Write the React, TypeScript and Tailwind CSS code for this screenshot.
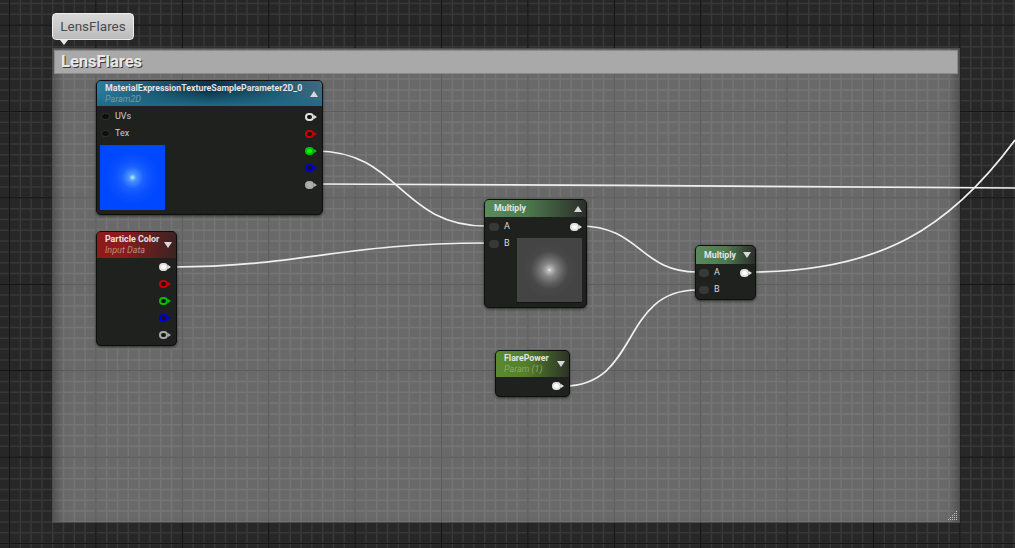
import React from 'react';

type PinColor = 'white' | 'red' | 'green' | 'blue' | 'gray';

const pinBorder: Record<PinColor, string> = {
  white: 'border-[#e0e0e0]',
  red: 'border-[#c80000]',
  green: 'border-[#00c000]',
  blue: 'border-[#0000d0]',
  gray: 'border-[#a8a8a8]',
};

const pinArrow: Record<PinColor, string> = {
  white: 'border-l-[#e0e0e0]',
  red: 'border-l-[#c80000]',
  green: 'border-l-[#00c000]',
  blue: 'border-l-[#0000d0]',
  gray: 'border-l-[#a8a8a8]',
};

// output pin, filled when a wire is attached
const OutPin = ({ color, filled, fill }: { color: PinColor; filled?: boolean; fill?: string }) => (
  <div className="flex h-[17px] items-center">
    <div className={`h-[8px] w-[9px] rounded-full border-2 ${pinBorder[color]} ${filled ? fill : 'bg-[#141414]'}`} />
    <div className={`h-0 w-0 border-y-[2px] border-l-[3px] border-y-transparent ${pinArrow[color]}`} />
  </div>
);

const InPin = ({ label }: { label: string }) => (
  <div className="flex h-[17px] items-center gap-[5px]">
    <div className="h-[8px] w-[10px] rounded-full bg-[#383838]" />
    <span className="text-[9px] leading-none text-[#dcdcdc]">{label}</span>
  </div>
);

const DarkInPin = ({ label }: { label: string }) => (
  <div className="flex h-[17px] items-center gap-[5px]">
    <div className="h-[7px] w-[9px] rounded-full border border-[#333] bg-[#0e0e0e]" />
    <span className="text-[9px] leading-none text-[#d0d0d0]">{label}</span>
  </div>
);

const UpArrow = () => (
  <div className="h-0 w-0 border-x-[4px] border-b-[6px] border-x-transparent border-b-[#d8d8d8]" />
);

const DownArrow = () => (
  <div className="h-0 w-0 border-x-[4px] border-t-[6px] border-x-transparent border-t-[#d8d8d8]" />
);

const nodeBox =
  'absolute flex flex-col overflow-hidden rounded-[5px] border border-[#0e0e0e] bg-[#1f211f] shadow-[0_1px_3px_rgba(0,0,0,0.6)]';

const NodeTitle = ({ title, sub, subColor }: { title: string; sub?: string; subColor?: string }) => (
  <div className="flex min-w-0 flex-col">
    <span className="whitespace-nowrap text-[8.8px] font-bold leading-[11px] text-[#e4e4e4]">{title}</span>
    {sub && <span className={`whitespace-nowrap text-[9px] italic leading-[11px] ${subColor}`}>{sub}</span>}
  </div>
);

// graph paper behind everything: 8 minor cells to a major cell
const STEP = 10.8;
const xs = Array.from({ length: 96 }, (_, i) => 9.5 + (i - 1) * STEP);
const ys = Array.from({ length: 54 }, (_, i) => 3.5 + (i - 1) * STEP);

const GridLines = () => (
  <svg className="absolute left-0 top-0" width="1015" height="548">
    <g stroke="#383838" strokeWidth="1.5">
      {xs.map((x) => <line key={x} x1={x} y1="0" x2={x} y2="548" />)}
      {ys.map((y) => <line key={y} x1="0" y1={y} x2="1015" y2={y} />)}
    </g>
    <g stroke="#141414" strokeWidth="1.2">
      {xs.filter((_, i) => (i - 1) % 8 === 0).map((x) => <line key={x} x1={x} y1="0" x2={x} y2="548" />)}
      {ys.filter((_, i) => (i - 3) % 8 === 0).map((y) => <line key={y} x1="0" y1={y} x2="1015" y2={y} />)}
    </g>
  </svg>
);

const Wires = () => (
  <svg className="absolute left-0 top-0" width="1015" height="548" fill="none" stroke="#f0f0f0" strokeWidth="1.7">
    <path d="M316 151 C400 151 400 226 486 226" />
    <path d="M316 184 C560 184 760 187 1015 188" />
    <path d="M172 267 C300 267 340 243 486 243" />
    <path d="M580 226 C640 226 640 272 697 272" />
    <path d="M564 386 C640 386 620 290 697 290" />
    <path d="M750 272 C880 272 950 228 1015 140" />
  </svg>
);

export default function App() {
  return (
    <div
      className="relative h-[548px] w-[1015px] overflow-hidden bg-[#272727]"
      style={{ fontFamily: 'Roboto, "Liberation Sans", sans-serif' }}
    >
      <GridLines />

      {/* comment bubble */}
      <div className="absolute left-[52px] top-[13px] flex h-[27px] w-[82px] items-center justify-center rounded-[4px] border border-[#eeeeee] bg-[linear-gradient(to_bottom,#d8d8d8,#bcbcbc)] text-[13.5px] text-[#4c4c4c]">
        LensFlares
        <div className="absolute left-[7px] top-[26px] h-0 w-0 border-x-[4px] border-t-[5px] border-x-transparent border-t-[#e8e8e8]" />
      </div>

      {/* comment box */}
      <div className="absolute left-[52px] top-[48px] flex h-[475px] w-[908px] flex-col border border-[#4c4c4c] bg-white/[0.31] p-px shadow-[inset_12px_0_12px_-10px_rgba(0,0,0,0.35),inset_-12px_0_12px_-10px_rgba(0,0,0,0.35)]">
        <div className="flex h-[24px] items-center border border-[#8a8a8a] bg-[#a9a9a9] px-[6px]">
          <span className="text-[16.5px] font-bold text-[#e8e8e8] [text-shadow:1px_1px_0_#3a3a3a]">LensFlares</span>
        </div>
        <svg className="absolute bottom-[1px] right-[1px]" width="12" height="12" viewBox="0 0 12 12" stroke="#c0c0c0" strokeWidth="1" strokeDasharray="1 1">
          <path d="M2 10.5 L11 10.5 M4 8.5 L11 8.5 M6 6.5 L11 6.5 M8 4.5 L11 4.5 M10 2.5 L11 2.5" />
        </svg>
      </div>

      <Wires />

      {/* texture sample */}
      <div className={`${nodeBox} left-[96px] top-[80px] h-[135px] w-[227px]`}>
        <div className="flex h-[25px] items-center justify-between bg-[image:linear-gradient(to_top,#1f6a86_0%,transparent_60%),linear-gradient(to_right,#2b7c9c,#0d3448_50%,#205a72_80%,#406a80)] pl-[8px] pr-[4px]">
          <NodeTitle title="MaterialExpressionTextureSampleParameter2D_0" sub="Param2D" subColor="text-[#6f9cac]" />
          <UpArrow />
        </div>
        <div className="flex flex-1 justify-between py-[2px] pl-[3px] pr-[5px]">
          <div className="flex flex-col">
            <div className="pl-[1px]"><DarkInPin label="UVs" /></div>
            <div className="pl-[1px]"><DarkInPin label="Tex" /></div>
            <div className="mt-[3px] h-[65px] w-[65px] bg-[radial-gradient(circle,#b0f0ff_0%,#4a94ff_8%,#1a60ff_24%,#0a50ff_40%,#0048ff_60%)]" />
          </div>
          <div className="flex flex-col">
            <OutPin color="white" />
            <OutPin color="red" />
            <OutPin color="green" filled fill="bg-[#00ff00]" />
            <OutPin color="blue" />
            <OutPin color="gray" filled fill="bg-[#b0b0b0]" />
          </div>
        </div>
      </div>

      {/* particle color */}
      <div className={`${nodeBox} left-[96px] top-[231px] h-[115px] w-[81px]`}>
        <div className="flex h-[26px] items-center justify-between bg-[linear-gradient(to_right,#8c1c1c,#8c1c1c_30%,#3c2222)] pl-[8px] pr-[4px]">
          <NodeTitle title="Particle Color" sub="Input Data" subColor="text-[#c08a80]" />
          <DownArrow />
        </div>
        <div className="flex flex-1 flex-col items-end pr-[5px]">
          <OutPin color="white" filled fill="bg-white" />
          <OutPin color="red" />
          <OutPin color="green" />
          <OutPin color="blue" />
          <OutPin color="gray" />
        </div>
      </div>

      {/* multiply with preview */}
      <div className={`${nodeBox} left-[484px] top-[199px] h-[109px] w-[103px]`}>
        <div className="flex h-[17px] items-center justify-between bg-[linear-gradient(to_right,#5a8a5a,#4e7a4e_40%,#2a2e2a)] pl-[9px] pr-[4px]">
          <NodeTitle title="Multiply" />
          <UpArrow />
        </div>
        <div className="flex flex-1 flex-col py-[1px] pl-[4px] pr-[4px]">
          <div className="flex justify-between">
            <InPin label="A" />
            <OutPin color="white" filled fill="bg-white" />
          </div>
          <div className="flex justify-between">
            <InPin label="B" />
            <div className="mt-[3px] h-[65px] w-[65px] border-b border-[#111] bg-[radial-gradient(circle,#eeeeee_0%,#bbbbbb_4%,#858585_15%,#5e5e5e_30%,#484848_42%,#444444_60%)]" />
          </div>
        </div>
      </div>

      {/* multiply */}
      <div className={`${nodeBox} left-[695px] top-[245px] h-[55px] w-[61px]`}>
        <div className="flex h-[18px] items-center justify-between bg-[linear-gradient(to_right,#5a8a5a,#4e7a4e_50%,#2a2e2a)] pl-[8px] pr-[4px]">
          <NodeTitle title="Multiply" />
          <DownArrow />
        </div>
        <div className="flex flex-1 flex-col pl-[3px] pr-[3px]">
          <div className="flex justify-between">
            <InPin label="A" />
            <OutPin color="white" filled fill="bg-white" />
          </div>
          <InPin label="B" />
        </div>
      </div>

      {/* flare power */}
      <div className={`${nodeBox} left-[495px] top-[350px] h-[47px] w-[75px]`}>
        <div className="flex h-[26px] items-center justify-between bg-[linear-gradient(to_right,#5a8a30,#54802c_40%,#2c3224)] pl-[8px] pr-[4px]">
          <NodeTitle title="FlarePower" sub="Param (1)" subColor="text-[#8aa860]" />
          <DownArrow />
        </div>
        <div className="flex flex-1 flex-col items-end pr-[5px]">
          <OutPin color="white" filled fill="bg-white" />
        </div>
      </div>
    </div>
  );
}
